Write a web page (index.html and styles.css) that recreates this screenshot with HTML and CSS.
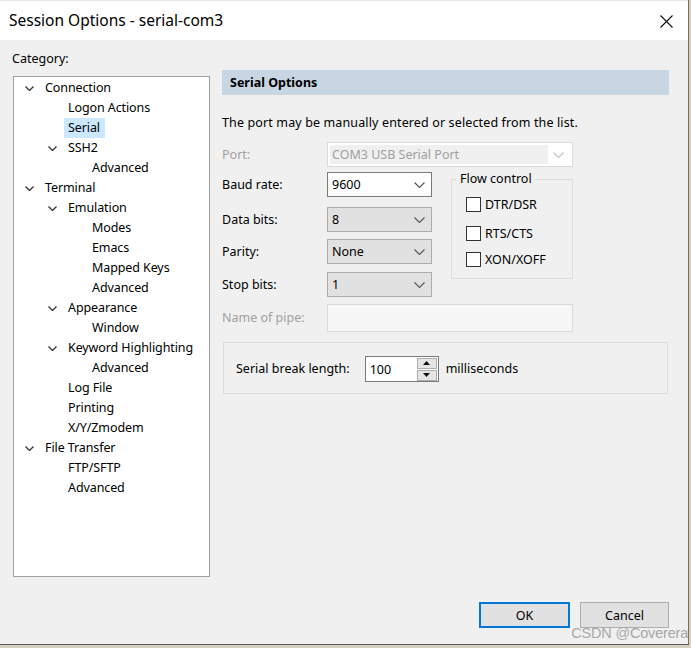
FILE: index.html
```html
<!DOCTYPE html>
<html>
<head>
<meta charset="utf-8">
<link rel="stylesheet" href="styles.css">
</head>
<body>
<div class="window">
  <div class="titlebar">
    <span class="title">Session Options - serial-com3</span>
    <svg class="close" width="13" height="13" viewBox="0 0 13 13"><path d="M0.5 0.5 L12.5 12.5 M12.5 0.5 L0.5 12.5" stroke="#111" stroke-width="1.1" fill="none"/></svg>
  </div>
  <div class="body">
    <div class="main">
      <div class="left">
        <div class="cat-label">Category:</div>
        <div class="tree">
          <div class="row l0"><span class="exp"><svg width="9" height="5" viewBox="0 0 9 5"><polyline points="0.5,0.5 4.5,4.5 8.5,0.5" fill="none" stroke="#333" stroke-width="1.3"/></svg></span><span class="lbl">Connection</span></div>
          <div class="row l1"><span class="exp"></span><span class="lbl">Logon Actions</span></div>
          <div class="row l1"><span class="exp"></span><span class="lbl sel">Serial</span></div>
          <div class="row l1"><span class="exp"><svg width="9" height="5" viewBox="0 0 9 5"><polyline points="0.5,0.5 4.5,4.5 8.5,0.5" fill="none" stroke="#333" stroke-width="1.3"/></svg></span><span class="lbl">SSH2</span></div>
          <div class="row l2"><span class="exp"></span><span class="lbl">Advanced</span></div>
          <div class="row l0"><span class="exp"><svg width="9" height="5" viewBox="0 0 9 5"><polyline points="0.5,0.5 4.5,4.5 8.5,0.5" fill="none" stroke="#333" stroke-width="1.3"/></svg></span><span class="lbl">Terminal</span></div>
          <div class="row l1"><span class="exp"><svg width="9" height="5" viewBox="0 0 9 5"><polyline points="0.5,0.5 4.5,4.5 8.5,0.5" fill="none" stroke="#333" stroke-width="1.3"/></svg></span><span class="lbl">Emulation</span></div>
          <div class="row l2"><span class="exp"></span><span class="lbl">Modes</span></div>
          <div class="row l2"><span class="exp"></span><span class="lbl">Emacs</span></div>
          <div class="row l2"><span class="exp"></span><span class="lbl">Mapped Keys</span></div>
          <div class="row l2"><span class="exp"></span><span class="lbl">Advanced</span></div>
          <div class="row l1"><span class="exp"><svg width="9" height="5" viewBox="0 0 9 5"><polyline points="0.5,0.5 4.5,4.5 8.5,0.5" fill="none" stroke="#333" stroke-width="1.3"/></svg></span><span class="lbl">Appearance</span></div>
          <div class="row l2"><span class="exp"></span><span class="lbl">Window</span></div>
          <div class="row l1"><span class="exp"><svg width="9" height="5" viewBox="0 0 9 5"><polyline points="0.5,0.5 4.5,4.5 8.5,0.5" fill="none" stroke="#333" stroke-width="1.3"/></svg></span><span class="lbl">Keyword Highlighting</span></div>
          <div class="row l2"><span class="exp"></span><span class="lbl">Advanced</span></div>
          <div class="row l1"><span class="exp"></span><span class="lbl">Log File</span></div>
          <div class="row l1"><span class="exp"></span><span class="lbl">Printing</span></div>
          <div class="row l1"><span class="exp"></span><span class="lbl">X/Y/Zmodem</span></div>
          <div class="row l0"><span class="exp"><svg width="9" height="5" viewBox="0 0 9 5"><polyline points="0.5,0.5 4.5,4.5 8.5,0.5" fill="none" stroke="#333" stroke-width="1.3"/></svg></span><span class="lbl">File Transfer</span></div>
          <div class="row l1"><span class="exp"></span><span class="lbl">FTP/SFTP</span></div>
          <div class="row l1"><span class="exp"></span><span class="lbl">Advanced</span></div>
        </div>
      </div>
      <div class="right">
        <div class="panel-header">Serial Options</div>
        <div class="desc">The port may be manually entered or selected from the list.</div>
        <div class="form">
          <div class="flabel disabled r1">Port:</div>
          <div class="combo disabled wide r1"><span class="ctext">COM3 USB Serial Port</span><svg class="chev" width="11" height="6" viewBox="0 0 11 6"><polyline points="0.5,0.5 5.5,5.5 10.5,0.5" fill="none" stroke="#c4c4c4" stroke-width="1.1"/></svg></div>

          <div class="flabel r2">Baud rate:</div>
          <div class="combo focus r2"><span class="ctext">9600</span><svg class="chev" width="11" height="6" viewBox="0 0 11 6"><polyline points="0.5,0.5 5.5,5.5 10.5,0.5" fill="none" stroke="#555" stroke-width="1.1"/></svg></div>

          <div class="flabel r3">Data bits:</div>
          <div class="combo r3"><span class="ctext">8</span><svg class="chev" width="11" height="6" viewBox="0 0 11 6"><polyline points="0.5,0.5 5.5,5.5 10.5,0.5" fill="none" stroke="#555" stroke-width="1.1"/></svg></div>

          <div class="flabel r4">Parity:</div>
          <div class="combo r4"><span class="ctext">None</span><svg class="chev" width="11" height="6" viewBox="0 0 11 6"><polyline points="0.5,0.5 5.5,5.5 10.5,0.5" fill="none" stroke="#555" stroke-width="1.1"/></svg></div>

          <div class="flabel r5">Stop bits:</div>
          <div class="combo r5"><span class="ctext">1</span><svg class="chev" width="11" height="6" viewBox="0 0 11 6"><polyline points="0.5,0.5 5.5,5.5 10.5,0.5" fill="none" stroke="#555" stroke-width="1.1"/></svg></div>

          <div class="flabel disabled r6">Name of pipe:</div>
          <div class="textbox disabled wide r6"></div>

          <div class="flow">
            <div class="legend">Flow control</div>
            <div class="check c1"><span class="box"></span><span>DTR/DSR</span></div>
            <div class="check c2"><span class="box"></span><span>RTS/CTS</span></div>
            <div class="check c3"><span class="box"></span><span>XON/XOFF</span></div>
          </div>
        </div>
        <div class="break-group">
          <span class="blabel">Serial break length:</span>
          <div class="spin">
            <span class="stext">100</span>
            <div class="spin-btns">
              <div class="sbtn"><svg width="7" height="4" viewBox="0 0 7 4"><polygon points="0,4 3.5,0 7,4" fill="#111"/></svg></div>
              <div class="sbtn"><svg width="7" height="4" viewBox="0 0 7 4"><polygon points="0,0 3.5,4 7,0" fill="#111"/></svg></div>
            </div>
          </div>
          <span class="blabel">milliseconds</span>
        </div>
      </div>
    </div>
    <div class="buttons">
      <div class="btn default">OK</div>
      <div class="btn cancel">Cancel</div>
    </div>
    <div class="watermark">CSDN @Coverera</div>
  </div>
</div>
</body>
</html>
```
FILE: styles.css
```css
html, body {
  margin: 0;
  padding: 0;
}
body {
  width: 691px;
  height: 648px;
  background: #d5d0bf;
  font-family: "Noto Sans", "Open Sans", sans-serif;
  font-size: 12.5px;
  color: #000;
  overflow: hidden;
}
.window {
  width: 688px;
  height: 644px;
  border-right: 1px solid #707070;
  border-bottom: 1px solid #5c5c5c;
  background: #f0f0f0;
  display: flex;
  flex-direction: column;
}
.titlebar {
  height: 40px;
  background: #fff;
  display: flex;
  align-items: center;
  justify-content: space-between;
  padding: 0 15px 0 9px;
  box-sizing: border-box;
  border-top: 1px solid #e8e8e8;
}
.title {
  font-size: 15.5px;
  margin-top: -1px;
}
.close {
  display: block;
  margin-top: 1px;
}
.body {
  flex: 1;
  position: relative;
  padding: 10px 19px 0 13px;
  display: flex;
  flex-direction: column;
}
.main {
  display: grid;
  grid-template-columns: 197px 447px;
  column-gap: 12px;
}
.cat-label {
  height: 18px;
  line-height: 18px;
  margin: 0 0 8px -1px;
}
.tree {
  border: 1px solid #a0a0a0;
  background: #fff;
  padding-top: 1px;
  box-sizing: border-box;
  height: 501px;
}
.row {
  height: 20px;
  display: flex;
  align-items: center;
  white-space: nowrap;
}
.row.l0 { padding-left: 11px; }
.row.l1 { padding-left: 34px; }
.row.l2 { padding-left: 58px; }
.exp {
  width: 20px;
  flex: none;
  display: flex;
  align-items: center;
}
.exp svg { display: block; }
.lbl {
  line-height: 20px;
  letter-spacing: -0.1px;
}
.lbl.sel {
  background: #cce8ff;
  padding: 0 5px 0 4px;
  margin-left: -4px;
}
.right {
  margin-top: 20px;
  display: flex;
  flex-direction: column;
}
.panel-header {
  height: 25px;
  line-height: 25px;
  background: #c8d5e2;
  font-weight: bold;
  padding-left: 8px;
  font-size: 12.5px;
}
.desc {
  margin-top: 19px;
  height: 18px;
  line-height: 18px;
  letter-spacing: 0.13px;
}
.form {
  margin-top: 10px;
  display: grid;
  grid-template-columns: 105px 105px 19px 122px;
  grid-template-rows: 30px 35px 32px 33px 32px 28px;
}
.r1 { grid-row: 1; }
.r2 { grid-row: 2; }
.r3 { grid-row: 3; }
.r4 { grid-row: 4; }
.r5 { grid-row: 5; }
.r6 { grid-row: 6; }
.flabel {
  grid-column: 1;
  height: 25px;
  line-height: 25px;
}
.flabel.r6 {
  height: 28px;
  line-height: 28px;
}
.disabled {
  color: #a0a0a0;
}
.combo {
  grid-column: 2;
  height: 25px;
  box-sizing: border-box;
  border: 1px solid #adadad;
  background: #e1e1e1;
  display: flex;
  align-items: center;
  justify-content: space-between;
  padding: 0 6px 0 4px;
}
.combo.wide, .textbox.wide {
  grid-column: 2 / 5;
}
.combo.focus {
  background: #fff;
  border-color: #7a7a7a;
}
.combo.disabled {
  background: #fff;
  border-color: #d9d9d9;
  padding: 2px 8px 2px 2px;
}
.combo.disabled .ctext {
  background: #f0f0f0;
  align-self: stretch;
  display: flex;
  align-items: center;
  padding-left: 2px;
  width: 216px;
}
.chev {
  display: block;
  flex: none;
}
.textbox {
  height: 28px;
  box-sizing: border-box;
  border: 1px solid #d9d9d9;
  background: #f7f7f7;
}
.flow {
  grid-column: 4;
  grid-row: 2 / 6;
  margin-top: 7px;
  height: 100px;
  box-sizing: border-box;
  border: 1px solid #dcdcdc;
  position: relative;
  padding: 0 0 0 14px;
}
.legend {
  position: absolute;
  top: -10px;
  left: 5px;
  padding: 0 3px;
  background: #f0f0f0;
  line-height: 18px;
}
.check {
  display: flex;
  align-items: center;
  height: 18px;
}
.check.c1 { margin-top: 15px; }
.check.c2 { margin-top: 11px; }
.check.c3 { margin-top: 8px; }
.box {
  width: 15px;
  height: 15px;
  box-sizing: border-box;
  border: 1px solid #333;
  background: #fff;
  margin-right: 4px;
  flex: none;
}
.break-group {
  margin: 10px 1px 0 1px;
  height: 52px;
  box-sizing: border-box;
  border: 1px solid #dcdcdc;
  display: flex;
  align-items: center;
  padding: 0 0 0 12px;
}
.spin {
  margin-left: 15px;
  margin-right: 7px;
  width: 74px;
  height: 26px;
  box-sizing: border-box;
  border: 1px solid #7a7a7a;
  background: #fff;
  display: flex;
  align-items: center;
  justify-content: space-between;
  padding: 0 1px 0 4px;
  margin-top: 2px;
}
.spin-btns {
  display: flex;
  flex-direction: column;
  gap: 1px;
}
.sbtn {
  width: 20px;
  height: 11px;
  box-sizing: border-box;
  border: 1px solid #adadad;
  background: #e5e5e5;
  display: flex;
  align-items: center;
  justify-content: center;
}
.sbtn svg { display: block; }
.buttons {
  margin-top: 25px;
  display: flex;
  justify-content: flex-end;
  gap: 10px;
}
.btn {
  height: 26px;
  box-sizing: border-box;
  border: 1px solid #adadad;
  background: #e1e1e1;
  display: flex;
  align-items: center;
  justify-content: center;
  width: 89px;
}
.btn.default {
  width: 91px;
  border: 2px solid #0078d7;
}
.watermark {
  position: absolute;
  right: 0;
  top: 584px;
  font-family: "Liberation Sans", sans-serif;
  font-size: 14.5px;
  color: #a8a8a8;
  line-height: 18px;
  letter-spacing: -0.2px;
}
```
